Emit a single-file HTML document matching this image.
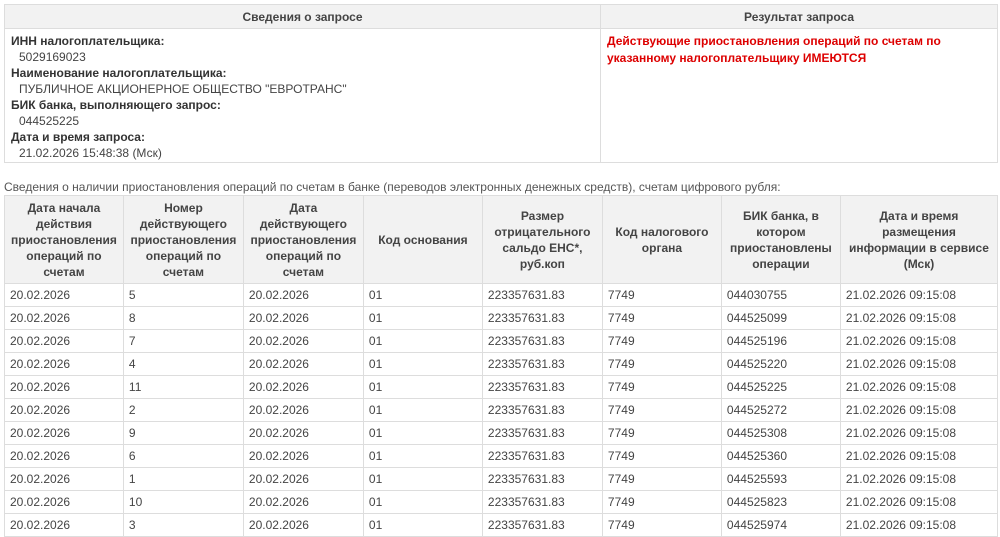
<!DOCTYPE html>
<html><head><meta charset="utf-8"><style>
body{margin:0;width:1000px;height:536px;overflow:hidden;background:#fff;font-family:"Liberation Sans",sans-serif;font-size:12px;color:#444}
table{border-collapse:collapse;position:absolute;left:4px}
td,th{border:1px solid #ddd;padding:0 6px}
th{background:#f2f2f2;font-weight:bold;color:#444;text-align:center}
#t1{top:4px;width:994px}
#t1 th{height:23px}
#t1 td{vertical-align:top;height:129px;padding-top:4px;padding-bottom:0}
.l{font-weight:bold;color:#333;line-height:16px}
.v{padding-left:8px;line-height:16px}
.red{color:#d00;font-weight:bold;line-height:17px}
#cap{position:absolute;top:180px;left:4px;color:#555}
#t2{top:195px;width:994px}
#t2 th{height:87px;line-height:16px}
#t2 td{height:22px;line-height:22px;padding:0 5px}
</style></head><body>
<table id="t1"><tr><th style="width:583px">Сведения о запросе</th><th>Результат запроса</th></tr>
<tr><td>
<div class="l">ИНН налогоплательщика:</div><div class="v">5029169023</div>
<div class="l">Наименование налогоплательщика:</div><div class="v">ПУБЛИЧНОЕ АКЦИОНЕРНОЕ ОБЩЕСТВО "ЕВРОТРАНС"</div>
<div class="l">БИК банка, выполняющего запрос:</div><div class="v">044525225</div>
<div class="l">Дата и время запроса:</div><div class="v">21.02.2026 15:48:38 (Мск)</div>
</td><td><div class="red">Действующие приостановления операций по счетам по указанному налогоплательщику ИМЕЮТСЯ</div></td></tr></table>
<div id="cap">Сведения о наличии приостановления операций по счетам в банке (переводов электронных денежных средств), счетам цифрового рубля:</div>
<table id="t2">
<colgroup><col style="width:118px"><col style="width:120px"><col style="width:120px"><col style="width:119px"><col style="width:120px"><col style="width:119px"><col style="width:119px"><col></colgroup>
<tr><th>Дата начала действия приостановления операций по счетам</th><th>Номер действующего приостановления операций по счетам</th><th>Дата действующего приостановления операций по счетам</th><th>Код основания</th><th>Размер отрицательного сальдо ЕНС*, руб.коп</th><th>Код налогового органа</th><th>БИК банка, в котором приостановлены операции</th><th>Дата и время размещения информации в сервисе (Мск)</th></tr>
<tr><td>20.02.2026</td><td>5</td><td>20.02.2026</td><td>01</td><td>223357631.83</td><td>7749</td><td>044030755</td><td>21.02.2026 09:15:08</td></tr>
<tr><td>20.02.2026</td><td>8</td><td>20.02.2026</td><td>01</td><td>223357631.83</td><td>7749</td><td>044525099</td><td>21.02.2026 09:15:08</td></tr>
<tr><td>20.02.2026</td><td>7</td><td>20.02.2026</td><td>01</td><td>223357631.83</td><td>7749</td><td>044525196</td><td>21.02.2026 09:15:08</td></tr>
<tr><td>20.02.2026</td><td>4</td><td>20.02.2026</td><td>01</td><td>223357631.83</td><td>7749</td><td>044525220</td><td>21.02.2026 09:15:08</td></tr>
<tr><td>20.02.2026</td><td>11</td><td>20.02.2026</td><td>01</td><td>223357631.83</td><td>7749</td><td>044525225</td><td>21.02.2026 09:15:08</td></tr>
<tr><td>20.02.2026</td><td>2</td><td>20.02.2026</td><td>01</td><td>223357631.83</td><td>7749</td><td>044525272</td><td>21.02.2026 09:15:08</td></tr>
<tr><td>20.02.2026</td><td>9</td><td>20.02.2026</td><td>01</td><td>223357631.83</td><td>7749</td><td>044525308</td><td>21.02.2026 09:15:08</td></tr>
<tr><td>20.02.2026</td><td>6</td><td>20.02.2026</td><td>01</td><td>223357631.83</td><td>7749</td><td>044525360</td><td>21.02.2026 09:15:08</td></tr>
<tr><td>20.02.2026</td><td>1</td><td>20.02.2026</td><td>01</td><td>223357631.83</td><td>7749</td><td>044525593</td><td>21.02.2026 09:15:08</td></tr>
<tr><td>20.02.2026</td><td>10</td><td>20.02.2026</td><td>01</td><td>223357631.83</td><td>7749</td><td>044525823</td><td>21.02.2026 09:15:08</td></tr>
<tr><td>20.02.2026</td><td>3</td><td>20.02.2026</td><td>01</td><td>223357631.83</td><td>7749</td><td>044525974</td><td>21.02.2026 09:15:08</td></tr>
</table>
</body></html>
